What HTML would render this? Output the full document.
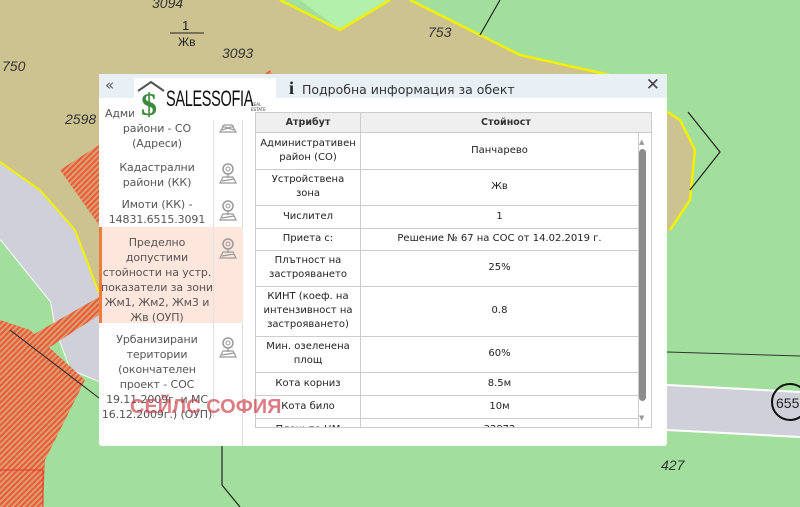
<!DOCTYPE html>
<html><head><meta charset="utf-8"><style>
*{margin:0;padding:0;box-sizing:border-box}
body{width:800px;height:507px;overflow:hidden;position:relative;font-family:"DejaVu Sans","Liberation Sans",sans-serif;background:#a3df9c}
svg.map{position:absolute;left:0;top:0}
.dlg{position:absolute;left:99px;top:74px;width:568px;height:372px;background:#fff;border-radius:3px}
.hdr{position:absolute;left:0;top:0;width:568px;height:24px;background:#e9f0f5}
.ttl{position:absolute;left:190px;top:4px;font-size:12.5px;color:#333}
.close{position:absolute;right:7px;top:1px;font-size:17px;color:#444}
.back{position:absolute;left:6px;top:2px;font-size:15px;color:#555}
.logo{position:absolute;left:35px;top:4px;width:142px;height:42px;background:#fff}
.left{position:absolute;left:0;top:24px;width:144px;height:348px;border-right:1px solid #ddd}
.it{position:absolute;left:0;width:144px;text-align:center;font-size:11px;line-height:15px;color:#555;letter-spacing:-0.1px}
.it span{display:block;width:116px}
.ic{position:absolute;left:119px;width:20px;height:22px}
.vsep{position:absolute;left:114px;width:1px;background:#e2e2e2}
table{position:absolute;left:156px;top:38px;width:384px;border-collapse:collapse;font-size:10px;color:#222}
td{border-bottom:1px solid #ccc;border-right:1px solid #ccc;text-align:center;line-height:14px;padding:0}
td:first-child{border-left:1px solid #ccc;width:105px}
.th{position:absolute;left:156px;top:38px;width:397px;height:21px;background:#efefef;border:1px solid #ccc;font-size:9.5px;font-weight:bold;color:#333}
.clip{position:absolute;left:156px;top:59px;width:397px;height:295px;overflow:hidden;border-left:1px solid #ccc;border-right:1px solid #ccc;border-bottom:1px solid #ccc}
.sb{position:absolute;left:540px;top:75px;width:7px;height:252px;background:#8c8c8c;border-radius:4px}
</style></head><body>
<svg class="map" width="800" height="507" viewBox="0 0 800 507">
<defs><pattern id="h" width="4" height="4" patternUnits="userSpaceOnUse" patternTransform="rotate(45)"><rect width="4" height="4" fill="#d9a070"/><rect width="2" height="4" fill="#ec5a3a"/></pattern></defs>
<rect width="800" height="507" fill="#a3df9c"/>
<polygon points="0,0 280,0 340,30 390,0 410,0 520,55 610,75 680,120 695,150 690,200 670,230 600,240 400,240 150,240 99,240 99,300 0,300" fill="#cdc391"/>
<polygon points="300,0 390,0 340,30" fill="#b2f0ab"/>
<polyline points="280,0 340,30 390,0" fill="none" stroke="#f5f000" stroke-width="2.5"/>
<polyline points="410,0 520,55 610,75 680,120 695,150 690,200 670,230" fill="none" stroke="#f5f000" stroke-width="2.5"/>
<polyline points="688,112 720,152 690,190" fill="none" stroke="#222" stroke-width="1.2"/>
<line x1="500" y1="0" x2="480" y2="35" stroke="#222" stroke-width="1.2"/>
<polygon points="0,162 40,190 75,230 99,293 99,380 75,375 55,330 50,302 0,240" fill="#cfd0d9"/>
<polyline points="0,162 40,190 75,230 99,293" fill="none" stroke="#f5f000" stroke-width="2"/>
<polyline points="0,240 50,302 55,330 70,370 99,382" fill="none" stroke="#fff" stroke-width="2"/>
<polygon points="0,240 50,302 55,330 70,370 99,382 99,507 0,507" fill="#a3df9c"/>
<polygon points="0,320 30,330 85,380 60,430 45,460 43,507 0,507" fill="url(#h)"/>
<polygon points="15,345 99,297 99,315 30,360" fill="url(#h)"/>
<polygon points="60,170 99,145 99,225" fill="url(#h)"/>
<polygon points="250,85 270,70 280,90" fill="url(#h)"/>
<line x1="10" y1="330" x2="99" y2="398" stroke="#222" stroke-width="1"/>
<polyline points="0,470 43,470 43,507" fill="none" stroke="#e33" stroke-width="1"/>
<polygon points="667,385 800,392 800,437 667,430" fill="#cfd0d9"/>
<line x1="667" y1="385" x2="800" y2="392" stroke="#fff" stroke-width="2"/>
<line x1="667" y1="430" x2="800" y2="437" stroke="#fff" stroke-width="2"/>
<line x1="667" y1="352" x2="800" y2="356" stroke="#333" stroke-width="1"/>
<circle cx="790" cy="402" r="18" fill="none" stroke="#111" stroke-width="2"/>
<text x="776" y="408" font-size="14" fill="#222" font-family="Liberation Sans">6556</text>
<polyline points="222,446 222,485 240,507" fill="none" stroke="#222" stroke-width="1.2"/>
<g font-family="Liberation Sans" font-style="italic" font-size="14" fill="#333">
<text x="152" y="8">3094</text><text x="222" y="58">3093</text><text x="428" y="37">753</text>
<text x="2" y="71">750</text><text x="65" y="124">2598</text><text x="661" y="470">427</text></g>
<text x="182" y="30" font-size="13" fill="#222" font-family="Liberation Sans">1</text>
<line x1="170" y1="33" x2="204" y2="33" stroke="#222"/>
<text x="178" y="46" font-size="12" fill="#222" font-family="Liberation Sans">Жв</text>
</svg>
<div class="dlg">
<div class="hdr"><div class="back">«</div><div class="ttl"><b style="font-family:'Liberation Serif',serif;font-size:18px;color:#222">i</b>&nbsp; Подробна информация за обект</div><div class="close">✕</div></div>
<div class="left">
<div class="it" style="top:8px"><span>Административни райони - СО (Адреси)</span></div>
<div class="it" style="top:62px"><span>Кадастрални райони (КК)</span></div>
<div class="it" style="top:99px"><span>Имоти (КК) - 14831.6515.3091</span></div>
<div style="position:absolute;left:0;top:129px;width:144px;height:96px;background:#fde6dc;border-left:3px solid #ec7d3c"></div>
<div class="it" style="top:137px"><span>Пределно допустими стойности на устр. показатели за зони Жм1, Жм2, Жм3 и Жв (ОУП)</span></div>
<div class="it" style="top:234px"><span>Урбанизирани територии (окончателен проект - СОС 19.11.2009г. и МС 16.12.2009г.) (ОУП)</span></div>
<div class="vsep" style="top:0;height:320px"></div>
<svg class="ic" style="top:14px" viewBox="0 0 20 22"><path d="M2 20 L6 13 H14 L18 20 Z M4 18 L16 14 M4 14 L16 18" fill="none" stroke="#999" stroke-width="1.2"/></svg>
<svg class="ic" style="top:64px" viewBox="0 0 20 22"><circle cx="10" cy="7" r="5" fill="none" stroke="#999" stroke-width="1.5"/><circle cx="10" cy="7" r="2" fill="none" stroke="#999"/><path d="M10 12 V16 M2 21 L5 15 H15 L18 21 Z M4 19 L16 17" fill="none" stroke="#999" stroke-width="1.2"/></svg>
<svg class="ic" style="top:101px" viewBox="0 0 20 22"><circle cx="10" cy="7" r="5" fill="none" stroke="#999" stroke-width="1.5"/><circle cx="10" cy="7" r="2" fill="none" stroke="#999"/><path d="M10 12 V16 M2 21 L5 15 H15 L18 21 Z M4 19 L16 17" fill="none" stroke="#999" stroke-width="1.2"/></svg>
<svg class="ic" style="top:139px" viewBox="0 0 20 22"><circle cx="10" cy="7" r="5" fill="none" stroke="#999" stroke-width="1.5"/><circle cx="10" cy="7" r="2" fill="none" stroke="#999"/><path d="M10 12 V16 M2 21 L5 15 H15 L18 21 Z M4 19 L16 17" fill="none" stroke="#999" stroke-width="1.2"/></svg>
<svg class="ic" style="top:238px" viewBox="0 0 20 22"><circle cx="10" cy="7" r="5" fill="none" stroke="#999" stroke-width="1.5"/><circle cx="10" cy="7" r="2" fill="none" stroke="#999"/><path d="M10 12 V16 M2 21 L5 15 H15 L18 21 Z M4 19 L16 17" fill="none" stroke="#999" stroke-width="1.2"/></svg>
</div>
<div class="logo"><svg width="32" height="40" viewBox="0 0 32 40" style="position:absolute;left:2px;top:1px"><path d="M2 12 L15 3 L28 12" fill="none" stroke="#555" stroke-width="2"/><text x="5" y="36" font-size="32" font-family="Liberation Serif" fill="#3c8a3a" font-weight="bold">$</text></svg><span style="position:absolute;left:32px;top:8px;font-family:'Liberation Sans',sans-serif;font-size:22px;color:#111;letter-spacing:-0.5px;transform:scaleX(0.66);transform-origin:left;display:inline-block">SALESSOFIA</span><span style="position:absolute;left:117px;top:24px;font-size:4px;color:#333">REAL ESTATE</span></div>
<div class="th"><div style="position:absolute;left:0;top:0;width:105px;height:19px;border-right:1px solid #ccc;text-align:center;line-height:19px">Атрибут</div><div style="position:absolute;left:105px;top:0;width:290px;text-align:center;line-height:19px">Стойност</div></div>
<div class="clip"><table style="position:absolute;left:-1px;top:0">
<tr style="height:36px"><td>Административен<br>район (СО)</td><td>Панчарево</td></tr>
<tr style="height:36px"><td>Устройствена<br>зона</td><td>Жв</td></tr>
<tr style="height:23px"><td>Числител</td><td>1</td></tr>
<tr style="height:22px"><td>Приета с:</td><td>Решение № 67 на СОС от 14.02.2019 г.</td></tr>
<tr style="height:36px"><td>Плътност на<br>застрояването</td><td>25%</td></tr>
<tr style="height:50px"><td>КИНТ (коеф. на<br>интензивност на<br>застрояването)</td><td>0.8</td></tr>
<tr style="height:36px"><td>Мин. озеленена<br>площ</td><td>60%</td></tr>
<tr style="height:23px"><td>Кота корниз</td><td>8.5м</td></tr>
<tr style="height:23px"><td>Кота било</td><td>10м</td></tr>
<tr style="height:23px"><td>Площ по ЦМ</td><td>32872</td></tr>
</table></div>
<div class="sb"></div>
<div style="position:absolute;left:540px;top:64px;font-size:7px;color:#999">▲</div>
<div style="position:absolute;left:540px;top:340px;font-size:7px;color:#999">▼</div>
</div>
<div style="position:absolute;left:130px;top:396px;font-size:20px;font-weight:bold;color:rgba(205,70,80,0.7);font-family:'Liberation Sans',sans-serif">СЕЙЛС СОФИЯ</div>
</body></html>
